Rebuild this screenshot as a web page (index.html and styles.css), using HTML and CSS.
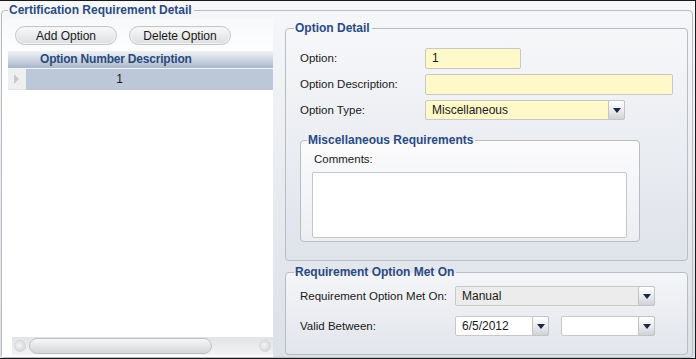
FILE: index.html
```html
<!DOCTYPE html>
<html>
<head>
<meta charset="utf-8">
<link rel="stylesheet" href="styles.css">
</head>
<body>
<div class="screen">
  <fieldset class="outer">
    <legend class="title">Certification Requirement Detail</legend>
    <div class="layout">
      <div class="left">
        <div class="toolbar">
          <button class="pill">Add Option</button>
          <button class="pill">Delete Option</button>
        </div>
        <div class="grid">
          <div class="grid-head"><span class="head-text">Option Number Description</span></div>
          <div class="grid-row">
            <div class="indicator"><span class="tri"></span></div>
            <div class="cell">1</div>
          </div>
        </div>
        <div class="hscroll">
          <span class="sarrow"></span>
          <div class="strack"><span class="thumb"></span></div>
          <span class="sarrow"></span>
        </div>
      </div>
      <div class="right">
        <fieldset class="group detail">
          <legend class="title">Option Detail</legend>
          <div class="row">
            <label class="lbl">Option:</label>
            <div class="inp yellow w95">1</div>
          </div>
          <div class="row">
            <label class="lbl">Option Description:</label>
            <div class="inp yellow w247"></div>
          </div>
          <div class="row">
            <label class="lbl">Option Type:</label>
            <div class="combo yellow w199">
              <span class="ctext">Miscellaneous</span>
              <span class="dd"><span class="caret"></span></span>
            </div>
          </div>
          <fieldset class="group misc">
            <legend class="title">Miscellaneous Requirements</legend>
            <div class="clbl">Comments:</div>
            <div class="textarea"></div>
          </fieldset>
        </fieldset>
        <fieldset class="group met">
          <legend class="title">Requirement Option Met On</legend>
          <div class="row r2">
            <label class="lbl lbl2">Requirement Option Met On:</label>
            <div class="combo grey w199">
              <span class="ctext">Manual</span>
              <span class="dd"><span class="caret"></span></span>
            </div>
          </div>
          <div class="row r2">
            <label class="lbl lbl2">Valid Between:</label>
            <div class="combo white w93">
              <span class="ctext">6/5/2012</span>
              <span class="dd"><span class="caret"></span></span>
            </div>
            <div class="combo white w93 gapl">
              <span class="ctext"></span>
              <span class="dd"><span class="caret"></span></span>
            </div>
          </div>
        </fieldset>
      </div>
    </div>
  </fieldset>
</div>
</body>
</html>
```

FILE: styles.css
```css
* { box-sizing: border-box; }
html, body { margin: 0; padding: 0; }
body {
  width: 696px;
  height: 359px;
  overflow: hidden;
  font-family: "Liberation Sans", Arial, sans-serif;
  font-size: 11.5px;
  color: #1a1a1a;
}
.screen {
  width: 696px;
  height: 359px;
  border-top: 1px solid #1a1a1a;
  border-right: 1px solid #1a1a1a;
  border-bottom: 1px solid #1a1a1a;
  background: linear-gradient(#f6f7f9, #dce0e7);
  padding: 3px 2px 2px 1px;
}
fieldset {
  margin: 0;
  min-width: 0;
}
.title {
  font-family: "Liberation Sans", Arial, sans-serif;
  font-weight: bold;
  font-size: 12px;
  letter-spacing: 0;
  color: #2a4a84;
  padding: 0 2px 0 1px;
  line-height: 13px;
}
.outer {
  height: 354px;
  border: 1px solid #b9bcc3;
  border-radius: 4px;
  padding: 0;
  display: flex;
  flex-direction: column;
}
.outer > .title { margin-left: 6px; }
.layout {
  flex: 1;
  display: flex;
  gap: 12px;
  padding-top: 1px;
}
.left {
  width: 271px;
  background: linear-gradient(#f7f8fa 0, #ffffff 40px);
  display: flex;
  flex-direction: column;
  padding: 8px 0 0 6px;
}
.toolbar {
  display: flex;
  gap: 12px;
  padding-left: 7px;
  height: 25px;
}
.pill {
  width: 102px;
  height: 19px;
  border: 1px solid #c3c6cb;
  border-radius: 10px;
  background: linear-gradient(#fafafa, #e9eaec 55%, #dcdee1);
  font-family: "Liberation Sans", Arial, sans-serif;
  font-size: 12px;
  color: #1a1a1a;
  padding: 0;
  box-shadow: inset 0 0 0 1px #f4f4f5;
}
.grid { display: flex; flex-direction: column; flex: 1; }
.grid-head {
  height: 17px;
  background: linear-gradient(#eff2f6 0%, #d3dae5 45%, #a8b6c9 100%);
  padding-left: 32px;
  line-height: 16px;
}
.head-text {
  font-weight: bold;
  font-size: 12px;
  color: #2a4a7c;
  letter-spacing: -0.2px;
}
.grid-row {
  display: flex;
  height: 22px;
  border-top: 1px solid #f2f4f7;
  font-size: 12px;
}
.indicator {
  width: 18px;
  background: #eeeff1;
  display: flex;
  align-items: center;
  justify-content: center;
  border-bottom: 1px solid #e3e4e6;
}
.tri {
  width: 0; height: 0;
  border-top: 5px solid transparent;
  border-bottom: 5px solid transparent;
  border-left: 5px solid #c7c9cc;
  margin-left: -2px;
}
.cell {
  flex: 1;
  background: #bcc7d8;
  text-align: center;
  line-height: 20px;
  padding-right: 60px;
}
.hscroll {
  height: 18px;
  margin-left: 4px;
  margin-bottom: 2px;
  display: flex;
  align-items: center;
  background: linear-gradient(#e2e3e5, #f3f3f4);
  padding: 0 2px;
}
.sarrow {
  width: 12px; height: 12px;
  border-radius: 50%;
  background: radial-gradient(circle at 40% 40%, #f4f4f4, #cdcfd2);
  border: 1px solid #d6d7d9;
}
.strack { flex: 1; padding: 0 3px; display: flex; align-items: center; }
.thumb {
  width: 183px;
  height: 16px;
  border: 1px solid #bfc1c4;
  border-radius: 8px;
  background: linear-gradient(#f7f7f7, #e3e4e6 55%, #d3d5d8);
}
.right {
  width: 403px;
  display: flex;
  flex-direction: column;
  gap: 5px;
  padding-top: 4px;
}
.group {
  border: 1px solid #b8bcc3;
  border-radius: 4px;
}
.detail > .title, .met > .title { margin-left: -6px; }
.misc > .title { margin-left: -5px; }
.detail {
  height: 239px;
  padding: 10px 14px 0 14px;
  background: linear-gradient(#f6f7f9, #dfe3ea);
}
.row {
  display: flex;
  align-items: center;
  height: 26px;
}
.lbl { width: 125px; }
.lbl2 { width: 155px; }
.inp, .combo {
  height: 21px;
  border: 1px solid #c8c8c8;
  border-radius: 2px;
  line-height: 19px;
  padding-left: 6px;
  font-size: 12px;
}
.yellow { background: #fff8c9; }
.grey { background: #ececec; }
.white { background: #ffffff; }
.w95 { width: 96px; }
.w247 { width: 248px; }
.w199 { width: 200px; }
.w93 { width: 94px; }
.gapl { margin-left: 12px; }
.combo {
  display: flex;
  justify-content: space-between;
  padding-right: 0;
  height: 20px;
}
.ctext { line-height: 18px; }
.dd {
  width: 17px;
  height: 20px;
  margin-top: -1px;
  margin-right: -1px;
  border: 1px solid #c2c4c8;
  border-radius: 2px;
  background: linear-gradient(#ffffff, #e6e7e9 60%, #cfd1d5);
  display: flex;
  align-items: center;
  justify-content: center;
}
.caret {
  width: 0; height: 0;
  border-left: 4px solid transparent;
  border-right: 4px solid transparent;
  border-top: 5px solid #17284a;
  margin-top: 1px;
}
.misc {
  margin-top: 11px;
  width: 340px;
  height: 108px;
  padding: 4px 11px 0 11px;
  background: linear-gradient(#fbfbfc, #eceef2);
}
.clbl { height: 21px; line-height: 16px; margin-left: 2px; }
.textarea {
  width: 315px;
  height: 66px;
  background: #fff;
  border: 1px solid #c5c6c9;
  border-radius: 2px;
}
.met {
  height: 89px;
  padding: 2px 14px 0 14px;
  background: linear-gradient(#f4f5f8, #e2e5eb);
}
.r2 { height: 30px; }
```
